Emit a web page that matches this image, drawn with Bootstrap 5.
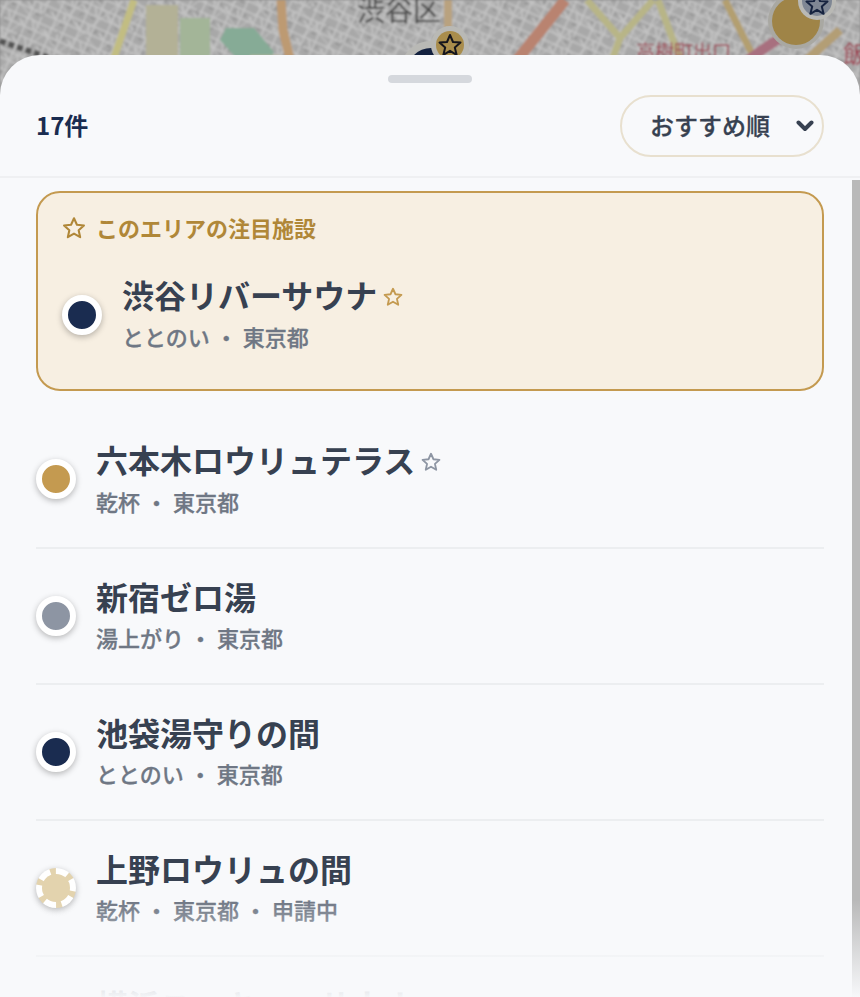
<!DOCTYPE html>
<html lang="ja">
<head>
    <meta charset="UTF-8">
    <meta name="viewport" content="width=device-width, initial-scale=1.0">
    <title>施設一覧</title>
    <link href="https://cdn.jsdelivr.net/npm/bootstrap@5.3.0/dist/css/bootstrap.min.css" rel="stylesheet">
    <style>
        html, body { height: 100%; overflow: hidden; }
        body {
            position: relative;
            font-family: "Noto Sans CJK JP", "Noto Sans", sans-serif;
            background: #8c8c8c;
        }
        .map-bg { position: absolute; top: 0; left: 0; width: 860px; height: 120px; }
        .sheet {
            position: absolute;
            top: 55px; left: 0; right: 0; bottom: 0;
            background: #f8f9fb;
            border-radius: 40px 40px 0 0;
            overflow: hidden;
        }
        .drag-handle { width: 84px; height: 8px; border-radius: 4px; background: #d5d8dd; margin: 20px auto 0; }
        .sheet-head { height: 95px; padding: 12px 36px 0; border-bottom: 2px solid #eff0f2; }
        .result-count { font-size: 24px; line-height: 36px; font-weight: 700; color: #1a2c50; margin-top: 12px; }
        .sort-select.form-select {
            width: 204px; height: 62px;
            font-size: 24px; font-weight: 500; color: #374151;
            -webkit-text-stroke: .3px #374151;
            padding: 0 40px 2px 28px;
            background-color: #f8f9fb;
            border: 2px solid #e8e0cf;
            background-image: url("data:image/svg+xml,%3csvg xmlns='http://www.w3.org/2000/svg' viewBox='0 0 18 12'%3e%3cpath fill='none' stroke='%23374151' stroke-width='4' stroke-linecap='round' stroke-linejoin='round' d='M2.500 2.500l6.500 6.500 6.500-6.500'/%3e%3c/svg%3e");
            background-position: right 8px center;
            background-size: 18px 12px;
        }
        .list-scroll { height: 819px; padding: 13px 36px 0; overflow: hidden; }
        .scroll-bar { position: absolute; top: 125px; right: 0; bottom: 0; width: 8px; background: #b9b9b9; }
        .featured-box {
            height: 200px;
            padding: 19px 24px;
            background: #f7efe2;
            border: 2px solid #c49a50;
            border-radius: 24px;
        }
        .featured-label { font-size: 22px; line-height: 30px; font-weight: 700; color: #b08738; margin-bottom: 30px; gap: 9px; }
        .featured-label svg { margin: 2px 0 0 -1px; }
        .spot-row { display: flex; align-items: center; gap: 20px; }
        .spot-item { height: 136px; border-bottom: 2px solid #eceef0; }
        .spot-item.first-item { height: 158px; padding-top: 20px; }
        .spot-dot {
            flex: none; width: 40px; height: 40px;
            border: 6px solid #fff; border-radius: 50%;
            box-shadow: 0 2px 6px rgba(0, 0, 0, .28);
        }
        .dot-navy { background: #1a2c50; }
        .dot-gold { background: #c49a50; }
        .dot-gray { background: #8d95a3; }
        .dot-pending { background: #e3d3ae; border: 6px dashed #fff; }
        .spot-text { padding-bottom: 6px; }
        .spot-text.has-star { padding-bottom: 6px; }
        .spot-name { font-size: 32px; line-height: 42px; font-weight: 700; color: #374151; margin: 0; display: flex; align-items: center; gap: 5px; white-space: nowrap; }
        .spot-name svg { margin-top: 6px; }
        .has-star .spot-name { line-height: 44px; }
        .spot-sub { font-size: 22px; line-height: 30px; font-weight: 500; color: #6f7784; -webkit-text-stroke: .3px #6f7784; margin: 5px 0 0; }
        .spot-sub span { margin: 0 5.500px; }
        .bottom-fade {
            position: absolute; left: 0; right: 0; bottom: 0; height: 97px;
            background: linear-gradient(to bottom, rgba(248, 249, 251, 0), rgba(248, 249, 251, .98));
        }
    </style>
</head>
<body>
    <!-- Map behind the sheet -->
    <svg class="map-bg" viewBox="0 0 860 120" aria-hidden="true">
        <defs>
            <filter id="soft"><feGaussianBlur stdDeviation="1"/></filter>
            <pattern id="streets" width="26" height="19" patternUnits="userSpaceOnUse" patternTransform="rotate(24)">
                <rect width="26" height="19" fill="#a8a8a8"/>
                <path d="M0 5h26M0 14h26M7 0v19M19 0v19M12 5l5 9M0 9l7 5" stroke="#c4c4c4" stroke-width="1.600" fill="none"/>
                <path d="M3 8h2M12 17h4M22 8v3" stroke="#8f8f8f" stroke-width="1.500" fill="none"/>
            </pattern>
            <pattern id="streets2" width="31" height="23" patternUnits="userSpaceOnUse" patternTransform="rotate(-38)">
                <path d="M0 8h31M14 0v23" stroke="#c8c8c8" stroke-width="1.500" fill="none"/>
                <path d="M22 15h5" stroke="#929292" stroke-width="2" fill="none"/>
            </pattern>
        </defs>
        <g filter="url(#soft)">
            <rect width="860" height="120" fill="url(#streets)"/>
            <rect width="860" height="120" fill="url(#streets2)" opacity=".6"/>
            <rect x="146" y="5" width="32" height="70" fill="#b3b196"/>
            <rect x="180" y="18" width="30" height="52" fill="#a3b598"/>
            <path d="M220 40l6-12 28 0 20 24-6 12-30-4z" fill="#86ab96"/>
            <path d="M250 55l30 0 8 30-34 0z" fill="#b5b39a"/>
            <path d="M134 0l-26 75" stroke="#c2bd82" stroke-width="7" fill="none"/>
            <path d="M281 0l2 30 14 58" stroke="#bd9a72" stroke-width="9" fill="none"/>
            <path d="M448 0v28" stroke="#b9a27f" stroke-width="8" fill="none"/>
            <path d="M565 0l-70 88" stroke="#b98370" stroke-width="11" fill="none"/>
            <path d="M587 0l33 38-18 50M653 0l-33 38M658 0l33 88" stroke="#b8b587" stroke-width="7" fill="none"/>
            <path d="M725 0l30 60" stroke="#b39f70" stroke-width="7" fill="none"/>
            <path d="M708 88l60-42 30-20" stroke="#a8707f" stroke-width="10" fill="none"/>
            <path d="M740 80l50-5 50-45" stroke="#b39e75" stroke-width="9" fill="none"/>
            <path d="M0 41l137 47" stroke="#555" stroke-width="6" stroke-dasharray="6 3" fill="none"/>
            <rect x="30" y="59" width="14" height="15" fill="#5673a3"/>
            <rect x="103" y="75" width="14" height="15" fill="#5673a3"/>
            <text x="357" y="21" font-size="28" fill="#444" font-family="Noto Sans CJK JP">渋谷区</text>
            <text x="636" y="59" font-size="19" fill="#9c4050" font-family="Noto Sans CJK JP">高樹町出口</text>
            <text x="843" y="63" font-size="24" fill="#9c4050" font-family="Noto Sans CJK JP">飯</text>
        </g>
        <circle cx="431" cy="72" r="31" fill="#b9b9b5"/>
        <circle cx="431" cy="72" r="24" fill="#13213f"/>
        <circle cx="450" cy="45" r="19" fill="#b9b9b5"/>
        <circle cx="450" cy="45" r="14" fill="#a98d4c"/>
        <path d="M450 35l3 7 7.500 .6-5.700 4.900 1.800 7.300-6.600-4-6.600 4 1.800-7.300-5.700-4.900 7.500-.6z" fill="none" stroke="#15151c" stroke-width="2" stroke-linejoin="round"/>
        <circle cx="796" cy="21" r="28" fill="#a9a8a2"/>
        <circle cx="796" cy="21" r="24" fill="#9f8447"/>
        <circle cx="817" cy="1" r="19" fill="#b9b9b5"/>
        <circle cx="817" cy="1" r="15" fill="#7f8794"/>
        <path d="M817 -6l3 7 7.500 .6-5.700 4.900 1.800 7.300-6.600-4-6.600 4 1.800-7.300-5.700-4.900 7.500-.6z" fill="none" stroke="#16233f" stroke-width="2" stroke-linejoin="round"/>
    </svg>

    <!-- Bottom sheet -->
    <section class="sheet">
        <div class="drag-handle"></div>
        <div class="sheet-head d-flex justify-content-between align-items-start">
            <div class="result-count">17件</div>
            <select class="form-select rounded-pill sort-select" aria-label="並び替え">
                <option>おすすめ順</option>
                <option>新着順</option>
            </select>
        </div>
        <div class="list-scroll">
            <div class="featured-box">
                <div class="featured-label d-flex align-items-center">
                    <svg width="26" height="26" viewBox="0 0 24 24"><path d="M12 3l2.700 6 6.500 .7-4.900 4.300 1.400 6.500-5.700-3.400-5.700 3.400 1.400-6.500-4.900-4.300 6.500-.7z" fill="none" stroke="#b08738" stroke-width="1.900" stroke-linejoin="round"/></svg>
                    このエリアの注目施設
                </div>
                <div class="spot-row">
                    <div class="spot-dot dot-navy"></div>
                    <div class="spot-text has-star">
                        <p class="spot-name">渋谷リバーサウナ
                            <svg width="22" height="22" viewBox="0 0 24 24"><path d="M12 3l2.700 6 6.500 .7-4.900 4.300 1.400 6.500-5.700-3.400-5.700 3.400 1.400-6.500-4.900-4.300 6.500-.7z" fill="none" stroke="#c49a50" stroke-width="2" stroke-linejoin="round"/></svg>
                        </p>
                        <p class="spot-sub">ととのい<span>・</span>東京都</p>
                    </div>
                </div>
            </div>
            <div class="spot-item first-item spot-row">
                <div class="spot-dot dot-gold"></div>
                <div class="spot-text has-star">
                    <p class="spot-name">六本木ロウリュテラス
                        <svg width="22" height="22" viewBox="0 0 24 24"><path d="M12 3l2.700 6 6.500 .7-4.900 4.300 1.400 6.500-5.700-3.400-5.700 3.400 1.400-6.500-4.900-4.300 6.500-.7z" fill="none" stroke="#8d95a3" stroke-width="2" stroke-linejoin="round"/></svg>
                    </p>
                    <p class="spot-sub">乾杯<span>・</span>東京都</p>
                </div>
            </div>
            <div class="spot-item spot-row">
                <div class="spot-dot dot-gray"></div>
                <div class="spot-text">
                    <p class="spot-name">新宿ゼロ湯</p>
                    <p class="spot-sub">湯上がり<span>・</span>東京都</p>
                </div>
            </div>
            <div class="spot-item spot-row">
                <div class="spot-dot dot-navy"></div>
                <div class="spot-text">
                    <p class="spot-name">池袋湯守りの間</p>
                    <p class="spot-sub">ととのい<span>・</span>東京都</p>
                </div>
            </div>
            <div class="spot-item spot-row">
                <div class="spot-dot dot-pending"></div>
                <div class="spot-text">
                    <p class="spot-name">上野ロウリュの間</p>
                    <p class="spot-sub">乾杯<span>・</span>東京都<span>・</span>申請中</p>
                </div>
            </div>
            <div class="spot-item spot-row">
                <div class="spot-dot dot-gold"></div>
                <div class="spot-text">
                    <p class="spot-name">横浜ユーキューサウナ</p>
                    <p class="spot-sub">乾杯<span>・</span>神奈川県</p>
                </div>
            </div>
        </div>
        <div class="scroll-bar"></div>
        <div class="bottom-fade"></div>
    </section>
    <script src="https://cdn.jsdelivr.net/npm/bootstrap@5.3.0/dist/js/bootstrap.bundle.min.js"></script>
</body>
</html>
